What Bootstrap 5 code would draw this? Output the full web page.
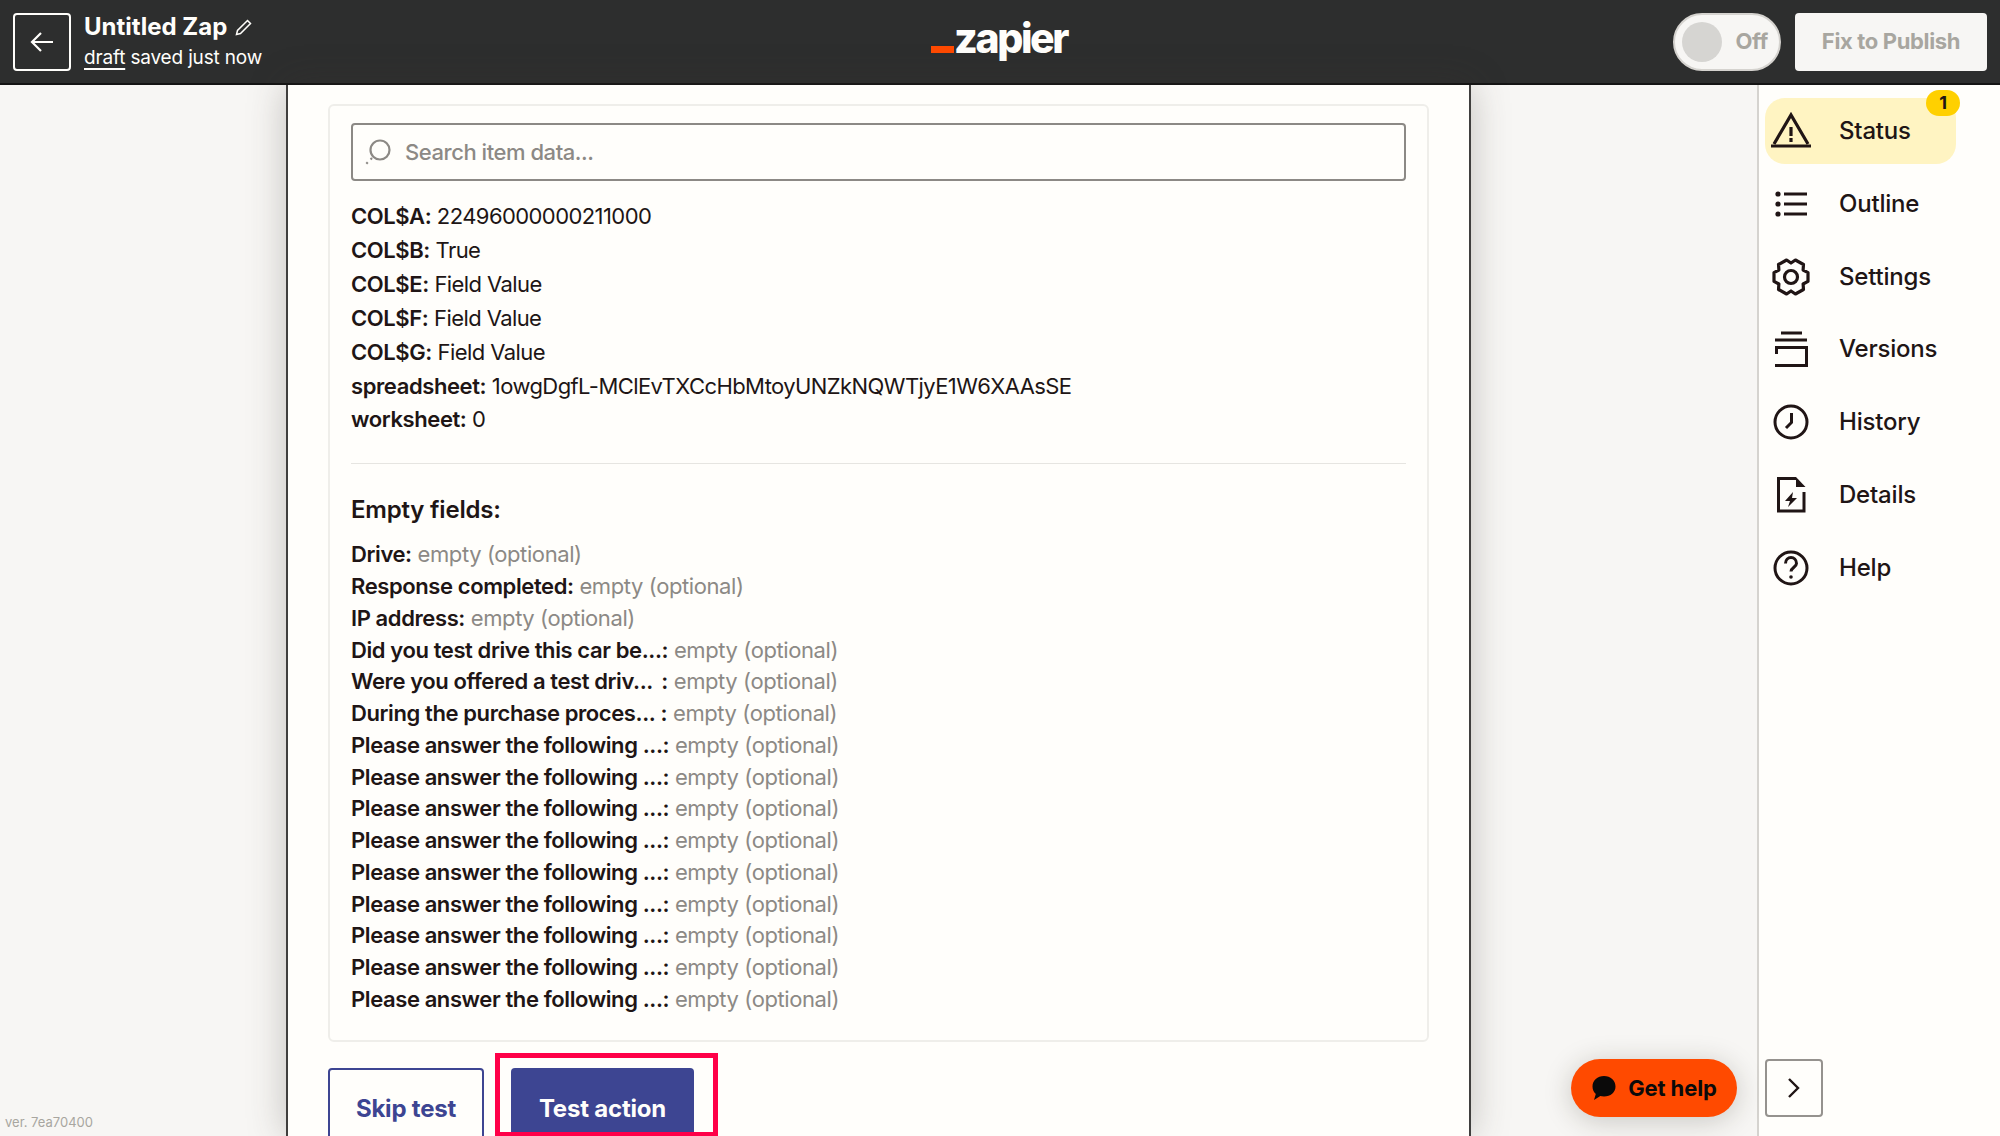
<!DOCTYPE html>
<html lang="en">
<head>
  <meta charset="UTF-8" />
  <title>Untitled Zap</title>
  <link href="https://cdn.jsdelivr.net/npm/bootstrap@5.3.0/dist/css/bootstrap.min.css" rel="stylesheet" />
  <style>
    html, body { height: 100%; overflow: hidden; }
    body { font-family: Inter, "Liberation Sans", sans-serif; color: #201515; background: #f7f6f4; }
    .zap-top { height: 85px; background: #2d2e2e; border-bottom: 2px solid #141414; padding: 12px 13px; color: #fffefb; flex: none; }
    .back-btn { width: 58px; height: 58px; border: 2px solid #fffefb; border-radius: 4px; background: transparent; padding: 0; margin-right: 13px; }
    .zap-title { font-size: 24px; font-weight: 700; line-height: 28px; }
    .zap-saved { font-size: 19px; line-height: 24px; margin-top: 5px; letter-spacing: -.17px; }
    .zap-saved u { text-underline-offset: 4px; text-decoration-thickness: 2px; }
    .logo-wrap { position: absolute; left: 931px; top: 11px; height: 60px; }
    .logo-bar { width: 23px; height: 7px; background: #ff4a00; margin-top: 35px; }
    .logo-text { font-size: 41px; font-weight: 800; letter-spacing: -2.4px; line-height: 60px; margin-top: -3px; }
    .off-toggle { width: 108px; height: 58px; background: #f7f6f4; border: 2px solid #d5d3cf; border-radius: 29px; padding: 0 11px 0 7px; }
    .off-knob { width: 40px; height: 40px; border-radius: 50%; background: #d6d5d2; }
    .off-text, .publish-btn { font-size: 22px; font-weight: 700; color: #a8a6a0; letter-spacing: -.35px; }
    .publish-btn { width: 192px; height: 58px; background: #f7f6f4; border: 0; border-radius: 4px; }
    .top-right { gap: 14px; }
    .zap-body { height: 1051px; }
    .side-left { width: 286px; background: #f7f6f4; }
    .ver-text { font-size: 13px; color: #a8a6a0; padding: 0 0 4px 5px; }
    .side-mid { flex: 1; }
    .zap-panel { width: 1185px; flex: none; background: #fffefb; border-left: 2px solid #403f3e; border-right: 2px solid #403f3e; padding: 19px 40px 0; box-shadow: 0 0 36px rgba(60,55,45,.28); position: relative; z-index: 1; }
    .data-box { width: 1101px; height: 938px; border: 2px solid #efeeea; border-radius: 6px; padding: 17px 21px 0; }
    .search-box { height: 58px; border: 2px solid #8c8985; border-radius: 4px; padding: 0 11px; gap: 13px; font-size: 22px; color: #8c8985; font-weight: 500; letter-spacing: -.45px; }
    .data-rows { margin-top: 19px; font-size: 22px; line-height: 33.9px; letter-spacing: -.58px; }
    .data-rows b, .empty-rows b { font-weight: 600; letter-spacing: -.4px; }
    .rule-line { height: 1px; background: #e6e5e1; margin: 26px 0 0; }
    .empty-head { font-size: 24px; font-weight: 600; line-height: 32px; margin-top: 30px; letter-spacing: -.2px; }
    .empty-rows { font-size: 22px; line-height: 31.75px; margin-top: 13px; letter-spacing: -.4px; }
    .empty-rows span { color: #8c8985; }
    .action-row { margin-top: 26px; gap: 27px; }
    .skip-btn, .test-btn { font-size: 24px; font-weight: 700; height: 90px; border-radius: 4px; padding: 0 0 9px; letter-spacing: -.2px; }
    .skip-btn { width: 156px; background: #fffefb; border: 2px solid #3d4592; color: #3d4592; }
    .test-btn { width: 183px; background: #3d4592; border: 0; color: #fffefb; }
    .test-mark { position: absolute; left: 207px; top: 968px; width: 223px; height: 83px; border: 5px solid #ff0048; border-bottom-width: 4px; pointer-events: none; }
    .side-right { width: 243px; flex: none; background: #fffefb; border-left: 2px solid #d5d3cf; padding: 13px 6px 0; position: relative; z-index: 1; }
    .tool-item { height: 66px; margin-bottom: 6.8px; border-radius: 20px; width: 191px; padding-left: 2px; font-size: 24px; font-weight: 500; letter-spacing: -.2px; position: relative; }
    .tool-item svg { width: 48px; height: 48px; margin-right: 24px; flex: none; }
    .tool-on { background: #fff4c2; }
    .tool-count { position: absolute; right: -4px; top: -8px; width: 34px; height: 26px; border-radius: 13px; background: #ffd000; font-size: 18px; font-weight: 700; line-height: 26px; text-align: center; }
    .chevron-btn { position: absolute; left: 6px; top: 974px; width: 58px; height: 58px; background: #fffefb; border: 2px solid #95928e; border-radius: 4px; padding: 0; }
    .help-btn { position: absolute; left: 1571px; top: 1059px; width: 166px; height: 58px; border: 0; border-radius: 29px; background: #ff4a00; color: #0b0a0a; font-size: 22px; font-weight: 700; box-shadow: 0 4px 28px rgba(40,35,25,.22); z-index: 2; gap: 12px; letter-spacing: -.1px; }
  </style>
</head>
<body class="d-flex flex-column">
  <!-- Top bar -->
  <div class="zap-top d-flex align-items-center position-relative">
    <button class="back-btn d-flex align-items-center justify-content-center">
      <svg width="26" height="26" viewBox="0 0 26 26" fill="none" stroke="#fffefb" stroke-width="2.2"><path d="M24 13H3M12 4l-9 9 9 9"/></svg>
    </button>
    <div>
      <div class="zap-title d-flex align-items-center">Untitled Zap
        <svg class="ms-2" width="18" height="18" viewBox="0 0 18 18" fill="none" stroke="#fffefb" stroke-width="1.5"><path d="M1.500 16.500l1-4L12.500 2.500l3 3-10 10z"/></svg>
      </div>
      <div class="zap-saved"><u>draft</u> saved just now</div>
    </div>
    <div class="logo-wrap d-flex">
      <div class="logo-bar"></div>
      <div class="logo-text">zapier</div>
    </div>
    <div class="ms-auto d-flex align-items-center top-right">
      <div class="off-toggle d-flex align-items-center justify-content-between">
        <div class="off-knob"></div>
        <div class="off-text">Off</div>
      </div>
      <button class="publish-btn">Fix to Publish</button>
    </div>
  </div>

  <div class="zap-body d-flex">
    <div class="side-left d-flex flex-column justify-content-end">
      <div class="ver-text">ver. 7ea70400</div>
    </div>

    <!-- Centre panel -->
    <div class="zap-panel">
      <div class="data-box">
        <div class="search-box d-flex align-items-center">
          <svg width="28" height="28" viewBox="0 0 28 28" fill="none" stroke="#8c8985" stroke-width="2.2"><circle cx="16" cy="12" r="9.500"/><path d="M8 20l-6 6" stroke-dasharray="2 4"/></svg>
          Search item data...
        </div>
        <div class="data-rows">
          <div><b>COL$A:</b> 22496000000211000</div>
          <div><b>COL$B:</b> True</div>
          <div><b>COL$E:</b> Field Value</div>
          <div><b>COL$F:</b> Field Value</div>
          <div><b>COL$G:</b> Field Value</div>
          <div><b>spreadsheet:</b> 1owgDgfL-MClEvTXCcHbMtoyUNZkNQWTjyE1W6XAAsSE</div>
          <div><b>worksheet:</b> 0</div>
        </div>
        <div class="rule-line"></div>
        <div class="empty-head">Empty fields:</div>
        <div class="empty-rows">
          <div><b>Drive:</b> <span>empty (optional)</span></div>
          <div><b>Response completed:</b> <span>empty (optional)</span></div>
          <div><b>IP address:</b> <span>empty (optional)</span></div>
          <div><b>Did you test drive this car be...:</b> <span>empty (optional)</span></div>
          <div><b>Were you offered a test driv...&nbsp;&#8201;:</b> <span>empty (optional)</span></div>
          <div><b>During the purchase proces...&nbsp;:</b> <span>empty (optional)</span></div>
          <div><b>Please answer the following ...:</b> <span>empty (optional)</span></div>
          <div><b>Please answer the following ...:</b> <span>empty (optional)</span></div>
          <div><b>Please answer the following ...:</b> <span>empty (optional)</span></div>
          <div><b>Please answer the following ...:</b> <span>empty (optional)</span></div>
          <div><b>Please answer the following ...:</b> <span>empty (optional)</span></div>
          <div><b>Please answer the following ...:</b> <span>empty (optional)</span></div>
          <div><b>Please answer the following ...:</b> <span>empty (optional)</span></div>
          <div><b>Please answer the following ...:</b> <span>empty (optional)</span></div>
          <div><b>Please answer the following ...:</b> <span>empty (optional)</span></div>
        </div>
      </div>
      <div class="action-row d-flex">
        <button class="skip-btn">Skip test</button>
        <button class="test-btn">Test action</button>
      </div>
      <div class="test-mark"></div>
    </div>

    <div class="side-mid"></div>

    <!-- Right tools -->
    <div class="side-right">
      <div class="tool-item tool-on d-flex align-items-center">
        <svg viewBox="0 0 48 48" fill="none" stroke="#201515" stroke-width="3.200"><path d="M7 37L24 8l17 29"/><path d="M4 39h40"/><path d="M24 20v9M24 31v4"/></svg>
        Status
        <span class="tool-count">1</span>
      </div>
      <div class="tool-item d-flex align-items-center">
        <svg viewBox="0 0 48 48" fill="#201515"><circle cx="11" cy="14" r="2.600"/><circle cx="11" cy="24" r="2.600"/><circle cx="11" cy="34" r="2.600"/><path d="M17 12.500h23v3H17zM17 22.500h23v3H17zM17 32.500h23v3H17z"/></svg>
        Outline
      </div>
      <div class="tool-item d-flex align-items-center">
        <svg viewBox="0 0 48 48" fill="none" stroke="#201515" stroke-width="3.200" stroke-linejoin="round"><path d="M41 19.600V28.400L36.100 31 36.500 36.500 28.400 41 24 38 19.600 41 11.500 36.500 11.900 31 7 28.400V19.600L11.900 17 11.500 11.500 19.600 7 24 10 28.400 7 36.500 11.500 36.100 17Z"/><circle cx="24" cy="24" r="6.500"/></svg>
        Settings
      </div>
      <div class="tool-item d-flex align-items-center">
        <svg viewBox="0 0 48 48" fill="none" stroke="#201515" stroke-width="3"><path d="M14 8h21M8 15h32"/><path d="M8 22.500h31.500v18H8M9.500 22v7"/></svg>
        Versions
      </div>
      <div class="tool-item d-flex align-items-center">
        <svg viewBox="0 0 48 48" fill="none" stroke="#201515" stroke-width="3"><circle cx="24" cy="24" r="16"/><path d="M24.500 15v9.500L19 30"/></svg>
        History
      </div>
      <div class="tool-item d-flex align-items-center">
        <svg viewBox="0 0 48 48" fill="none" stroke="#201515" stroke-width="3"><path d="M37 21v19H11.500V7.500H29"/><path d="M29 6l9.500 10H29z" fill="#201515" stroke="none"/><path d="M26 21l-8 9h5l-2 6 9-9h-5z" fill="#201515" stroke="none"/></svg>
        Details
      </div>
      <div class="tool-item d-flex align-items-center">
        <svg viewBox="0 0 48 48" fill="none" stroke="#201515" stroke-width="3"><circle cx="24" cy="24" r="16"/><path d="M18.500 19.500c0-8 11-8 11 0 0 3.500-5.500 4-5.500 8"/><circle cx="24" cy="33" r="1.800" fill="#201515" stroke="none"/></svg>
        Help
      </div>
      <button class="chevron-btn d-flex align-items-center justify-content-center">
        <svg width="14" height="22" viewBox="0 0 14 22" fill="none" stroke="#201515" stroke-width="2.400"><path d="M2 2l9 9-9 9"/></svg>
      </button>
    </div>
  </div>

  <button class="help-btn d-flex align-items-center justify-content-center">
    <svg width="25" height="26" viewBox="0 0 25 26" fill="#0b0a0a"><path d="M13 1c6.500 0 11.500 4.500 11.500 10.500S19.500 21.500 13 21.500c-1.500 0-2.700-.2-3.700-.5L3 25l1.800-6C2.800 17 1.500 14.500 1.500 11.500 1.500 5.500 6.500 1 13 1z"/></svg>
    Get help
  </button>
</body>
</html>
